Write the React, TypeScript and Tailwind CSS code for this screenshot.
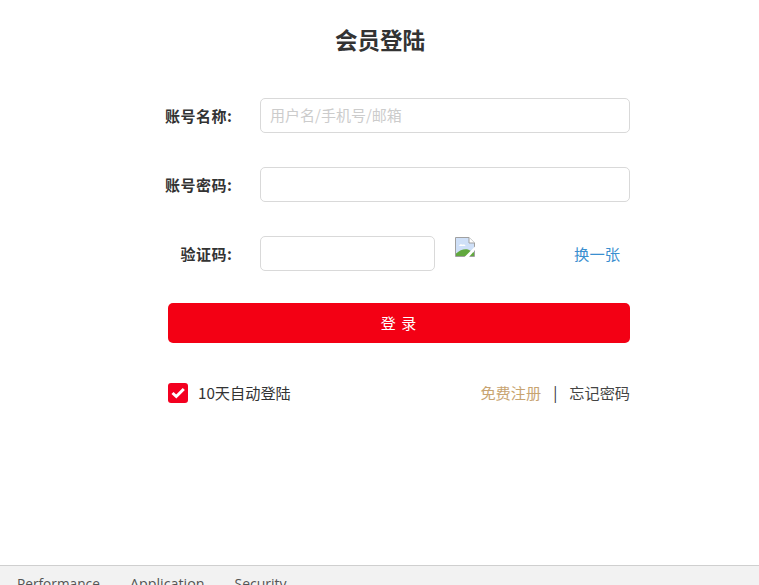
function BrokenImage() {
  return (
    <svg width="20" height="20" viewBox="0 0 20 20" className="block">
      <path d="M0.5 0.5H14L19.5 6V19.5H0.5Z" fill="#cfe0f8" stroke="#a0a0a0" />
      <path d="M14 0.5V6H19.5" fill="#fff" stroke="#a0a0a0" />
      <path d="M4 9c.6-2 2.500-2.400 3.500-1.200C8.800 7 10.500 7.800 10.500 9Z" fill="#fff" />
      <path d="M1 19v-2.500C5 13 9 11.500 13 12.500l6 3v3.500Z" fill="#62a83e" />
      <path d="M9.500 20L20 9.500v3.500L14 20Z" fill="#fff" />
    </svg>
  );
}

function Row({ label, children }: { label: string; children: React.ReactNode }) {
  return (
    <div className="flex h-[35px] items-center">
      <label className="w-[72.5px] text-right text-[15px] font-bold leading-[35px] tracking-[0.5px] text-[#333] whitespace-nowrap">{label}</label>
      <div className="ml-[27.5px] flex flex-1 items-center">{children}</div>
    </div>
  );
}

export default function App() {
  return (
    <div className="flex h-[585px] w-[759px] flex-col overflow-hidden bg-white font-['Noto_Sans_CJK_SC','Noto_Sans',sans-serif]">
      <main className="flex-1">
        <h1 className="pt-[22px] pl-[1px] text-center text-[22.500px] font-bold leading-[34px] text-[#333]">会员登陆</h1>
        <form className="ml-[160px] mt-[42px] flex w-[470px] flex-col gap-[34px]">
          <Row label="账号名称:">
            <input
              placeholder="用户名/手机号/邮箱"
              className="h-[35px] w-full rounded-[5px] border border-[#d9d9d9] px-[9px] pb-[2px] text-[15px] outline-none placeholder:text-[#ccc]"
            />
          </Row>
          <Row label="账号密码:">
            <input className="h-[35px] w-full rounded-[5px] border border-[#d9d9d9] px-[9px] text-[15px] outline-none" />
          </Row>
          <Row label="验证码:">
            <input className="h-[35px] w-[175px] rounded-[5px] border border-[#d9d9d9] px-[9px] text-[15px] outline-none" />
            <span className="ml-[20px] mb-[14px]"><BrokenImage /></span>
            <a className="ml-auto mr-[10px] text-[15.300px] text-[#3a8fd0]">换一张</a>
          </Row>
        </form>
        <div className="ml-[168px] mt-[32px] w-[462px]">
          <button type="button" className="h-[40px] w-full rounded-[5px] bg-[#f30014] text-[15px] tracking-[1px] text-white">登 录</button>
          <div className="mt-[40px] flex h-[20px] items-center text-[15.200px] text-[#333]">
            <span className="flex h-[20px] w-[20px] items-center justify-center rounded-[3px] bg-[#f30020]">
              <svg width="14" height="12" viewBox="0 0 14 12"><path d="M1.500 6l3.800 3.500L12.800 2" fill="none" stroke="#fff" strokeWidth="3" /></svg>
            </span>
            <span className="ml-[10px] pb-[2px]">10天自动登陆</span>
            <a className="ml-auto pb-[2px] text-[#c8a471]">免费注册</a>
            <span className="mx-[12px] pb-[2px] text-[#333]">|</span>
            <a className="pb-[2px] text-[#444]">忘记密码</a>
          </div>
        </div>
      </main>
      <footer className="flex h-[20px] gap-[30px] overflow-hidden border-t border-[#cfcfcf] bg-[#f2f2f2] pl-[17px] pt-[8px] font-['Open_Sans',sans-serif] text-[14px] leading-[19px] text-[#555]">
        <span className="text-[13.700px]">Performance</span>
        <span className="text-[14.300px]">Application</span>
        <span>Security</span>
      </footer>
    </div>
  );
}
